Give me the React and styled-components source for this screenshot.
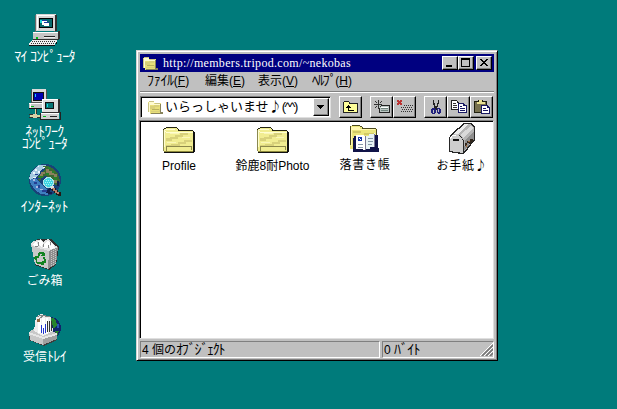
import React from "react";
import styled, { createGlobalStyle } from "styled-components";

const TEAL = "#007b7b";
const FACE = "#c0c0c0";
const SANS = `"Liberation Sans", "Noto Sans CJK JP", sans-serif`;
const JAPANESE = `"Noto Sans CJK JP", sans-serif`;
const SERIF = `"Liberation Serif", "Noto Sans CJK JP", serif`;

const Global = createGlobalStyle`
  body { margin: 0; background: ${TEAL}; overflow: hidden; }
  * { box-sizing: border-box; }
  svg { display: block; flex: none; }
`;

const Desktop = styled.main`
  width: 617px;
  height: 409px;
  display: flex;
  align-items: flex-start;
  background: ${TEAL};
  font: 12px/12px ${SANS};
`;

const Shortcuts = styled.nav`
  width: 89px;
  margin-right: 47px;
  padding-top: 14px;
  display: grid;
  grid-auto-rows: 75px;
`;

const Shortcut = styled.div`
  display: flex;
  flex-direction: column;
  align-items: center;
  gap: 4px;
`;

const Label = styled.span`
  display: block;
  color: ${(p) => p.$color || "#fff"};
  font-size: ${(p) => p.$size || 12}px;
  line-height: 12px;
  white-space: pre;
  text-align: center;
  letter-spacing: ${(p) => p.$track || 0}px;
`;

const Kana = styled.span`
  font-size: 14px;
  line-height: 12px;
  letter-spacing: ${(p) => p.$track || 0}px;
`;

const Note = styled.span`
  font-family: ${JAPANESE};
  line-height: 12px;
`;

const Window = styled.section`
  width: 362px;
  height: 311px;
  margin-top: 50px;
  padding: 2px;
  display: flex;
  flex-direction: column;
  background: ${FACE};
  border: 1px solid;
  border-color: #d4d4d4 #000 #000 #d4d4d4;
  box-shadow: inset 1px 1px #fff, inset -1px -1px #808080;
`;

const TitleBar = styled.header`
  height: 18px;
  margin: 1px 1px 0;
  padding: 0 2px;
  display: flex;
  align-items: center;
  background: #000080;
  color: #fff;
`;

const TitleText = styled.span`
  flex: 1;
  margin-left: 5px;
  font: 12px/16px ${SERIF};
  letter-spacing: ${(p) => p.$track}px;
  white-space: nowrap;
`;

const Raised = styled.button`
  padding: 0;
  display: flex;
  align-items: center;
  justify-content: center;
  background: ${FACE};
  border: 1px solid;
  border-color: #fff #000 #000 #fff;
  border-radius: 0;
  box-shadow: inset -1px -1px #808080;
`;

const CaptionButton = styled(Raised)`
  width: 16px;
  height: 14px;
  margin-left: ${(p) => (p.$apart ? 2 : 0)}px;
`;

const MenuBar = styled.nav`
  height: 20px;
  margin: 0 1px;
  padding: 0 0 2px 7px;
  display: flex;
  align-items: center;
  border-bottom: 1px solid #808080;
  box-shadow: 0 1px #fff;
`;

const MenuItem = styled.span`
  width: ${(p) => p.$width}px;
  font-size: 12px;
  line-height: 14px;
  white-space: nowrap;
  color: #000;
`;

const Toolbar = styled.div`
  height: 28px;
  margin: 0 1px;
  padding-top: 4px;
  display: flex;
  align-items: flex-start;
`;

const Address = styled.div`
  width: 191px;
  height: 22px;
  padding: 1px 1px 1px 6px;
  display: flex;
  align-items: center;
  background: #fff;
  border: 1px solid;
  border-color: #808080 #dfdfdf #dfdfdf #808080;
  box-shadow: inset 1px 1px #000;
`;

const AddressText = styled.span`
  flex: 1;
  margin-left: 2px;
  font-size: 13px;
  line-height: 16px;
  white-space: nowrap;
`;

const Face = styled.span`
  letter-spacing: -1.4px;
`;

const DropButton = styled(Raised)`
  width: 16px;
  height: 18px;
`;

const ToolGroup = styled.div`
  display: flex;
  margin-left: 8px;
`;

const ToolButton = styled(Raised)`
  width: 23px;
  height: 22px;
`;

const Files = styled.div`
  height: 219px;
  margin-right: 1px;
  display: grid;
  grid-template-columns: 78px 109px 76px 91px;
  background: #fff;
  border: 1px solid;
  border-color: #808080 #dfdfdf #dfdfdf #808080;
  box-shadow: inset 1px 1px #000;
`;

const File = styled.div`
  padding-top: ${(p) => p.$top}px;
  padding-left: ${(p) => p.$inset || 0}px;
  display: flex;
  flex-direction: column;
  align-items: center;
  gap: 4px;
`;

const StatusBar = styled.footer`
  height: 17px;
  margin: 2px 1px 0;
  display: grid;
  grid-template-columns: 240px 1fr;
  gap: 2px;
`;

const StatusCell = styled.div`
  padding-left: 1px;
  display: flex;
  align-items: center;
  justify-content: space-between;
  border: 1px solid;
  border-color: #808080 #fff #fff #808080;
`;

const Pixel = ({ w = 32, h = 32, children }) => (
  <svg width={w} height={h} viewBox={`0 0 ${w} ${h}`} shapeRendering="crispEdges">{children}</svg>
);

const ComputerIcon = () => (
  <Pixel>
    <path d="M7 0H27V17H7Z" fill="#d6d6d6" />
    <path d="M6 1H7V18H25V17H27V1H28V17H26V19H6Z" fill="#686868" />
    <path d="M26 1h2v16h-2z" fill="#303030" />
    <path d="M8 1H25V2H9V16H8Z" fill="#fff" />
    <path d="M10 4h14v10H10z" fill="#000" />
    <path d="M11 5h12v8H11z" fill="#08686b" />
    <path d="M11 6h2v3h-2z" fill="#19d8dc" />
    <path d="M13 6h5v5h-5zM15 8h5v4h-5z" fill="#fff" />
    <path d="M13 6h5v1h-5zM15 8h5v1h-5z" fill="#173ea0" />
    <path d="M4 18H29V26H4Z" fill="#c6c6c6" />
    <path d="M4 18h25v1H4z" fill="#fff" />
    <path d="M29 17h2v8h-1v1h-1zM4 25h25v1H4z" fill="#303030" />
    <path d="M15 22h11v1H15z" fill="#252525" />
    <path d="M15 23h11v1H15z" fill="#eee" />
    <path d="M7 23h2v2H7z" fill="#00b818" />
    <path d="M3 26H28V28H27V29H26V31H0V29H1V28H2V27H3Z" fill="#eee" />
    <path d="M3 27.5H27M2 29.5H26" stroke="#333" strokeDasharray="1 1" />
    <path d="M0 31h26v1H0zM27 28h1v2h-1z" fill="#111" />
  </Pixel>
);

const NetworkIcon = () => (
  <Pixel>
    <path d="M3 0H17V14H3Z" fill="#dadada" />
    <path d="M2 1h1v12h14V1h1v13H2z" fill="#505050" />
    <path d="M4 3h11v9H4z" fill="#111" />
    <path d="M5 4h9v7H5z" fill="#0000b0" />
    <path d="M6 5h1v3H6z" fill="#20cbff" />
    <path d="M0 14h15v6H0z" fill="#c6c6c6" />
    <path d="M0 14h15v1H0zM1 15h1v4H1z" fill="#fff" />
    <path d="M0 19h15v1H0z" fill="#111" />
    <path d="M2 17h3v1H2z" fill="#00b818" />
    <path d="M6 20h1v6H6zM1 26h10v2H1z" fill="#d8d8a0" />
    <path d="M7 20h1v5H7zM0 25h5v1H0zM0 28h11v1H0z" fill="#333" />
    <path d="M4 25h4v4H4z" fill="#d7cfaa" />
    <path d="M13 10h17v13H13z" fill="#dedede" />
    <path d="M13 10h16v1H14v11h-1z" fill="#fff" />
    <path d="M29 10h2v14H13v-1h16z" fill="#303030" />
    <path d="M16 13h9v7h-9z" fill="#111" />
    <path d="M17 14h7v5h-7z" fill="#087575" />
    <path d="M18 15h1v3h-1z" fill="#17dadc" />
    <path d="M12 24h18v6H12z" fill="#cfcfcf" />
    <path d="M12 24h18v1H12z" fill="#fff" />
    <path d="M11 24h1v6h19v-7h1v8H11z" fill="#222" />
    <path d="M14 27h3v1h-3z" fill="#00b818" />
    <path d="M21 27h7v1h-7z" fill="#222" />
  </Pixel>
);

const GlobeIcon = () => (
  <Pixel>
    <circle cx="16" cy="16" r="16" fill="#184278" />
    <path d="M10 1h7l-1 3-4 2-1 3-4 4-5 3-2-1 2-6 4-5z" fill="#a6cae0" />
    <path d="M1 16l5-2 5 5 4 4 6 5-2 3-7-1-7-5-4-7z" fill="#3f7fc0" />
    <path d="M13 2h6l6 3 4 5 2 7-3 4-4-1-2-6-6-2-3 1-2 4-3-2 2-4 3-3 3-3z" fill="#3a6a30" />
    <path d="M17 5h3v2h5v3h3v3h-3v-2h-5V9h-3zM12 8h4v2h-2v3h-3v-3h1zM25 15h3v4h-3z" fill="#8b805d" />
    <path d="M19 3h2v2h-2zM23 7h2v2h-2zM17 9h3v2h-3zM10 12h4v2h-4zM25 13h3v3h-3z" fill="#26832b" />
    <path d="M9 2h1v1H9zM6 5h2v2H6zM4 8h2v2H4zM9 7h2v2H9zM14 3h2v1h-2zM4 13h3v1H4z" fill="#eef6ff" />
    <path d="M6 10h3v1H6zM8 14h3v1H8zM5 18h3v2H5zM9 21h2v3H9zM13 26h5v2h-5z" fill="#253f92" />
    <path d="M7 22h2v2H7zM11 25h3v1h-3zM4 15h2v2H4z" fill="#a8b7e2" />
    <path d="M20 24h4v2h-3v3h-4zM28 17h2v5h-2zM19 28h4v2h-4z" fill="#111d49" />
    <circle cx="19.5" cy="18.5" r="5.5" fill="#aee4ea" />
    <circle cx="19.5" cy="18.5" r="4.5" fill="#3fd3e2" />
    <path d="M17 16.5h6M16 18.5h7M17 20.5h5" stroke="#a8f4f6" strokeDasharray="1 1" />
    <path d="M23 23h2v1h2v2h2v2h3v4h-3v-1h-2v-2h-2v-2h-2z" fill="#241816" />
    <path d="M23 23h1v1h2v2h2v2h2v2h-2v-1h-2v-2h-2v-2h-1z" fill="#b8806c" />
    <path d="M22 22h3v2h-2v1h-1z" fill="#dedede" />
  </Pixel>
);

const TrashIcon = () => (
  <Pixel>
    <path d="M2 4L9 0H22L30 8L27 26L20 31L6 26Z" fill="#303030" />
    <path d="M2 5L6 25L19 30L20 12Z" fill="#c9c9c9" />
    <path d="M20 12L29 8L27 25L19 30Z" fill="#8e8e8e" />
    <path d="M22.5 12v16M24.5 11v15M26.5 10v15" stroke="#c8c8c8" strokeDasharray="1 1" />
    <path d="M2 4L5 2L9 1L12 0L14 3L19 0L23 3L26 7L29 8L20 12L3 7Z" fill="#e2e2e2" />
    <path d="M4 5L7 2L10 7L5 7ZM9 2L12 1L14 4L13 8L10 6ZM15 5L19 1L22 5L20 9L14 9ZM22 4L25 7L26 9L21 10Z" fill="#fff" />
    <path d="M9 3h1v4H9zM14 5h1v3h-1zM21 3h1v3h-1zM19 6h1v3h-1zM6 7h3v1H6z" fill="#858585" />
    <path d="M10 13h5v1h1v3h-4v-1h1v-1h-2v2H9v-3h1zM6 17h4v2H8v4h3v2H8v-1H7v-3H6v-1H5v-2h1zM14 18h2v2h1v4h-2v2h-3v-1h-1v-2h2v-1h2v-2h-1z" fill="#138321" />
  </Pixel>
);

const InboxIcon = () => (
  <Pixel>
    <circle cx="21" cy="14" r="11" fill="#10246a" />
    <path d="M20 4h4l3 3 1 4-3 4-2-5-4-2zM26 17h4l-2 5h-3z" fill="#27822c" />
    <path d="M28 10h2v4h-2zM24 21h2v2h-2z" fill="#2855b3" />
    <path d="M0 18L6 14V11H23V17L28 19V26L15 32L0 26Z" fill="#3e3e3e" />
    <path d="M0 18L6 14V11H23V17L27 19V25L14 31L1 26Z" fill="#c8c8c8" />
    <path d="M5 17L7 3L12 0L22 3L24 17L14 22Z" fill="#ededed" />
    <path d="M8 3L12 1L21 3M10 5L14 2" stroke="#858585" fill="none" />
    <path d="M9 5h3v14H9zM13 4h3v16h-3zM17 4h2v16h-2z" fill="#fff" />
    <path d="M12 11h1v8h-1zM16 10h1v9h-1zM14 14h1v6h-1z" fill="#2134ce" />
    <path d="M18 7h1v11h-1zM20 7h1v11h-1zM22 7h1v10h-1z" fill="#333" />
    <path d="M8 5h3v3H8z" fill="#90653e" />
    <path d="M0 18L14 23L28 19V21L14 25L0 20Z" fill="#e6e6e6" />
    <path d="M14 25L28 21V25L14 31Z" fill="#a0a0a0" />
  </Pixel>
);

const FolderIcon = () => (
  <Pixel>
    <path d="M0 6h1V4h2V3h11v2h2v2h14v2h1v18H0z" fill="#f1ed91" />
    <path d="M2 5h10v1H1v17h1V8h28v1H3z" fill="#fffed0" />
    <path d="M3 14h4v-1h5v-2h5V9h8v2h-5v2h-5v2H9v2H3zM3 21h5v-1h7v-2h6v-2h8v2h-6v2h-6v2H8H3z" fill="#d8d17b" />
    <path d="M7 9h9v1H7zM19 13h8v1h-8zM4 18h9v1H4z" fill="#faf6b9" />
    <path d="M0 6h1v21H0z" fill="#8a8950" />
    <path d="M1 4h2v1H1zM3 3h11v1H3zM14 4h1v1h-1zM15 5h1v1h14v1H15zM0 5h1v1H0z" fill="#242414" />
    <path d="M3 22h26v1H4v4H3zM28 22h1v4h-1z" fill="#8c884c" />
    <path d="M30 7h1v1h1v20h-1v1H1v-1h29z" fill="#111" />
    <path d="M1 27h29v1H1z" fill="#8d893b" />
  </Pixel>
);

const NotebookIcon = () => (
  <Pixel>
    <path d="M1 3h2V2h8v2h3v2h13v20H1z" fill="#ece77c" />
    <path d="M2 4h9v2h15v1H3v16H2z" fill="#fff8b0" />
    <path d="M4 8h8v2H4zM15 10h11v2H15z" fill="#d1c967" />
    <path d="M1 3h1v19H1zM3 2h8v1H3zM11 3h2v1h-2zM13 4h1v1h13v1H13zM27 6h1v17h-1z" fill="#4d4a20" />
    <path d="M5 13h2v13h10v-2h9V12h3v13h1v4H4V15h1z" fill="#101348" />
    <path d="M7 12h8v1h2v14h-3v-1H7z" fill="#fff" />
    <path d="M17 13h3v-2h5v-1h1v14h-5v2h-4z" fill="#e7f2f5" />
    <path d="M9 14h4v4H9z" fill="#1535a3" />
    <path d="M10 15h1v1h-1zM11 16h1v1h-1z" fill="#fff" />
    <path d="M9 21h5v1H9zM9 24h5v1H9zM19 15h5v1h-5zM19 18h5v1h-5zM19 21h4v1h-4z" fill="#8497a8" />
    <path d="M16 13h1v14h-1zM25 11h1v13h-1z" fill="#7a7892" />
  </Pixel>
);

const MailboxIcon = () => (
  <Pixel>
    <g transform="translate(3 0)">
      <path d="M0 15L2 11L15 0H22L26 4V17L15 31H12L0 29Z" fill="#262626" />
      <path d="M3 12L16 1H21L25 5V16L15 29V18L12 13L8 11Z" fill="#b5b5b5" />
      <path d="M4 11L16 1H20L9 11Z" fill="#ededed" />
      <path d="M11 12L22 3L24 5L14 15Z" fill="#dadada" />
      <path d="M16 18L25 8V16L15 28Z" fill="#8e8e8e" />
      <path d="M1 16L3 12L8 11L12 14L14 18V30L1 28Z" fill="#cdcdcd" />
      <path d="M1 16L3 13L7 12" stroke="#fff" fill="none" />
      <path d="M4 16h6v2H4z" fill="#111" />
      <path d="M16 20h2v-2h3v-2h3v3h-2v2h-2v-1h-2v3h-2z" fill="#31261c" />
      <path d="M19 18h2v1h-2zM17 22h1v2h-1z" fill="#a46b3d" />
    </g>
  </Pixel>
);

const SmallFolder = () => (
  <Pixel w={16} h={16}>
    <path d="M1 3h1V2h5v2h7v9h2v2H3v-2H1z" fill="#e8df79" />
    <path d="M2 3h5v2h6v1H3v7H2z" fill="#fffbd1" />
    <path d="M3 7h4V6h5v2H8v2H4v2h8v-2h2v3H4z" fill="#d9d07a" />
    <path d="M1 4h1v9H1zM2 2h5v1H2zM8 4h5v1H8z" fill="#c9c384" />
    <path d="M13 5h1v8h2v2H4v-1h9z" fill="#88835a" />
    <path d="M5 10h7v1H5z" fill="#b9b15f" />
  </Pixel>
);

const MinimizeGlyph = () => <Pixel w={10} h={10}><path d="M1 7h6v2H1z" /></Pixel>;
const MaximizeGlyph = () => (
  <Pixel w={10} h={10}><path d="M0 0h9v9H0zM1 2v6h7V2z" fillRule="evenodd" /></Pixel>
);
const CloseGlyph = () => (
  <Pixel w={10} h={10}><path d="M1 1h2v1h1v1h2V2h1V1h2v1H8v1H7v1H6v1h1v1h1v1h1v1H7V7H6V6H4v1H3v1H1V7h1V6h1V5h1V4H3V3H2V2H1z" /></Pixel>
);
const DownGlyph = () => <Pixel w={8} h={6}><path d="M0 1h7v1H6v1H5v1H4v1H3V4H2V3H1V2H0z" /></Pixel>;

const UpFolderGlyph = () => (
  <Pixel w={17} h={16}>
    <path d="M1 3h1V2h5v1h1v1h8v10H1z" fill="#222" />
    <path d="M2 3h5v2h8v8H2z" fill="#ffff9a" />
    <path d="M6 6h1v1h1v1h1v1H7v2h5v1H6V9H4V8h1V7h1z" />
  </Pixel>
);
const ConnectGlyph = () => (
  <Pixel w={18} h={16}>
    <path d="M6 6h11v8H6z" fill="#bcc7c3" />
    <path d="M8 6h9v1H8zM6 13h11v1H6zM6 9h1v5H6zM16 7h1v7h-1z" fill="#222" />
    <path d="M8 8h7v1H8z" fill="#fff" /><path d="M8 9h7v1H8zM8 11h7v1H8z" fill="#70847e" />
    <path d="M5 1h1v9H5zM1 5h8v1H1zM2 2h1v1H2zM3 3h1v1H3zM7 3h1v1H7zM8 2h1v1H8zM3 7h1v1H3zM2 8h1v1H2zM7 7h1v1H7z" fill="#333" />
  </Pixel>
);
const DisconnectGlyph = () => (
  <Pixel w={18} h={16}>
    <path d="M8 6.5h9M5 8.5h12M6 10.5h11M5 12.5h12" stroke="#333" strokeDasharray="1 1" />
    <path d="M1 1h2v1h1V1h2v2H5v1h1v2H4V5H3v1H1V4h1V3H1z" fill="#bb3333" />
  </Pixel>
);
const CutGlyph = () => (
  <Pixel w={16} h={16}>
    <path d="M5 1h1v3h1v3h1v2h1v2H7V9H6V6H5zM10 1h1v4h-1v3H9v2H8V7h1V4h1z" fill="#222" />
    <path d="M4 9h3v1h1v4H7v1H4v-1H3v-4h1zM5 11v3h1v-3zM9 9h3v1h1v4h-1v1h-2v-1H9zM10 10v3h1v-3z" fillRule="evenodd" fill="#20207d" />
  </Pixel>
);
const CopyGlyph = () => (
  <Pixel w={18} h={16}>
    <path d="M1 1h6v1h1v1h1v8H1z" fill="#222" /><path d="M2 2h5v2h1v6H2z" fill="#fff" />
    <path d="M3 4h3v1H3zM3 6h4v1H3zM3 8h4v1H3z" fill="#333" />
    <path d="M8 4h6v1h1v1h2v8H8z" fill="#171763" /><path d="M9 5h4v2h3v6H9z" fill="#fff" />
    <path d="M10 7h2v1h-2zM10 9h5v1h-5zM10 11h5v1h-5z" fill="#171763" />
  </Pixel>
);
const PasteGlyph = () => (
  <Pixel w={18} h={16}>
    <path d="M1 2h4V1h5v1h4v12H1z" fill="#202010" /><path d="M2 3h11v10H2z" fill="#77714e" />
    <path d="M4 3h8v2H4zM6 1h3v2H6z" fill="#e8df92" />
    <path d="M8 6h7v1h1v1h1v7H8z" fill="#171763" /><path d="M9 7h5v2h2v5H9z" fill="#fff" />
    <path d="M10 9h3v1h-3zM10 11h5v1h-5z" fill="#171763" />
  </Pixel>
);
const GripGlyph = () => (
  <Pixel w={13} h={13}>
    <path d="M0 13L13 0M4 13L13 4M8 13L13 8" stroke="#fff" shapeRendering="auto" />
    <path d="M2 13L13 2M6 13L13 6M10 13L13 10" stroke="#777" strokeWidth="1.6" shapeRendering="auto" />
  </Pixel>
);

const shortcuts = [
  { Icon: ComputerIcon, text: "ﾏｲ ｺﾝﾋﾟｭｰﾀ", size: 14, track: -0.7 },
  { Icon: NetworkIcon, text: "ﾈｯﾄﾜｰｸ\nｺﾝﾋﾟｭｰﾀ", size: 14, track: -0.6 },
  { Icon: GlobeIcon, text: "ｲﾝﾀｰﾈｯﾄ", size: 14, track: -0.2 },
  { Icon: TrashIcon, text: "ごみ箱", size: 12, track: 0 },
  { Icon: InboxIcon, text: "受信", kana: "ﾄﾚｲ", size: 12, track: 0 },
];

const menus = [
  { kana: "ﾌｧｲﾙ", key: "F", width: 58, track: -0.3 },
  { text: "編集", key: "E", width: 53 },
  { text: "表示", key: "V", width: 54 },
  { kana: "ﾍﾙﾌﾟ", key: "H", width: 50, track: -1.6 },
];

const files = [
  { Icon: FolderIcon, text: "Profile", track: 0, top: 3 },
  { Icon: FolderIcon, text: "鈴鹿8耐Photo", track: 0, top: 3 },
  { Icon: NotebookIcon, text: "落書き帳", track: 0.8, top: 2 },
  { Icon: MailboxIcon, text: "お手紙", note: "♪", track: 0.8, top: 2, inset: 27 },
];

const tools = [
  [UpFolderGlyph],
  [ConnectGlyph, DisconnectGlyph],
  [CutGlyph, CopyGlyph, PasteGlyph],
];

export default function App() {
  return (
    <>
      <Global />
      <Desktop>
        <Shortcuts>
          {shortcuts.map(({ Icon, text, kana, size, track }) => (
            <Shortcut key={text}>
              <Icon />
              <Label $size={size} $track={track}>{text}{kana && <Kana $track={-0.6}>{kana}</Kana>}</Label>
            </Shortcut>
          ))}
        </Shortcuts>
        <Window>
          <TitleBar>
            <SmallFolder />
            <TitleText $track={0.32}>http://members.tripod.com/~nekobas</TitleText>
            <CaptionButton aria-label="Minimize"><MinimizeGlyph /></CaptionButton>
            <CaptionButton aria-label="Maximize"><MaximizeGlyph /></CaptionButton>
            <CaptionButton aria-label="Close" $apart><CloseGlyph /></CaptionButton>
          </TitleBar>
          <MenuBar>
            {menus.map((m) => (
              <MenuItem key={m.key} $width={m.width}>
                {m.text}{m.kana && <Kana $track={m.track}>{m.kana}</Kana>}(<u>{m.key}</u>)
              </MenuItem>
            ))}
          </MenuBar>
          <Toolbar>
            <Address>
              <SmallFolder />
              <AddressText>いらっしゃいませ<Note>♪</Note><Face>(^^)</Face></AddressText>
              <DropButton aria-label="Open list"><DownGlyph /></DropButton>
            </Address>
            {tools.map((icons, i) => (
              <ToolGroup key={i}>
                {icons.map((Icon, j) => <ToolButton key={j}><Icon /></ToolButton>)}
              </ToolGroup>
            ))}
          </Toolbar>
          <Files>
            {files.map(({ Icon, text, note, track, top, inset }) => (
              <File key={text} $top={top} $inset={inset}>
                <Icon />
                <Label $color="#000" $track={track}>{text}{note && <Note>{note}</Note>}</Label>
              </File>
            ))}
          </Files>
          <StatusBar>
            <StatusCell><Label $color="#000">4 個の<Kana $track={-1.3}>ｵﾌﾞｼﾞｪｸﾄ</Kana></Label></StatusCell>
            <StatusCell><Label $color="#000">0 <Kana $track={-0.8}>ﾊﾞｲﾄ</Kana></Label><GripGlyph /></StatusCell>
          </StatusBar>
        </Window>
      </Desktop>
    </>
  );
}
